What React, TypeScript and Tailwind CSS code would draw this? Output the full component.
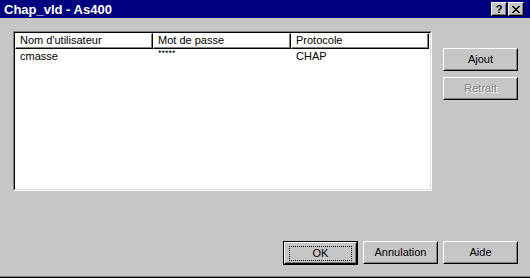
import type { ReactNode } from "react";

const font = "font-['Liberation_Sans',Arial,sans-serif]";

function Button({
  children,
  isDefault,
  disabled,
}: {
  children: ReactNode;
  isDefault?: boolean;
  disabled?: boolean;
}) {
  const inner = (
    <div className="flex h-full w-full border border-b-black border-l-white border-r-black border-t-white">
      <div className="flex h-full w-full items-center justify-center border border-b-[#808080] border-l-[#c6c6c6] border-r-[#808080] border-t-[#c6c6c6]">
        {isDefault ? (
          <span className="flex h-[15px] w-[63px] items-center justify-center border border-dotted border-black">
            {children}
          </span>
        ) : (
          <span
            className={
              disabled ? "text-[#808080] [text-shadow:1px_1px_0_#ffffff]" : ""
            }
          >
            {children}
          </span>
        )}
      </div>
    </div>
  );

  if (isDefault) {
    return (
      <div className="h-[24px] w-[75px] border border-black">{inner}</div>
    );
  }
  return <div className="h-[23px] w-[75px]">{inner}</div>;
}

function TitleButton({ children }: { children: ReactNode }) {
  return (
    <div className="flex h-[14px] w-[16px] border border-b-black border-l-white border-r-black border-t-white bg-[#c6c6c6]">
      <div className="flex h-full w-full items-center justify-center border border-b-[#808080] border-l-[#c6c6c6] border-r-[#808080] border-t-[#c6c6c6]">
        {children}
      </div>
    </div>
  );
}

function HeaderCell({ label }: { label: string }) {
  return (
    <div className="h-[16px] w-[138px] border border-b-black border-l-white border-r-black border-t-white">
      <div className="h-full border-b border-r border-b-[#808080] border-r-[#808080] pl-[4px] leading-[13px]">
        {label}
      </div>
    </div>
  );
}

export default function App() {
  return (
    <div
      className={`${font} flex h-[278px] w-[530px] flex-col bg-[#c6c6c6] text-[11px] text-black`}
    >
      <div className="flex h-[18px] items-center justify-between bg-[#000080] pl-[4px] pr-[6px]">
        <span className="text-[13px] font-bold leading-none text-white">
          Chap_vld - As400
        </span>
        <div className="flex gap-[1px]">
          <TitleButton>
            <span className="text-[11px] font-bold leading-none">?</span>
          </TitleButton>
          <TitleButton>
            <svg width="8" height="7" viewBox="0 0 8 7" shapeRendering="crispEdges">
              <path
                d="M0 0h2v1h-2zM6 0h2v1h-2zM1 1h2v1h-2zM5 1h2v1h-2zM2 2h4v1h-4zM3 3h2v1h-2zM2 4h4v1h-4zM1 5h2v1h-2zM5 5h2v1h-2zM0 6h2v1h-2zM6 6h2v1h-2z"
                fill="#000"
              />
            </svg>
          </TitleButton>
        </div>
      </div>

      <div className="flex flex-1 flex-col border-b border-b-[#808080]">
        <div className="flex pl-[13px] pt-[13px]">
          <div className="h-[160px] w-[419px] border border-b-white border-l-[#808080] border-r-white border-t-[#808080]">
            <div className="h-full w-full border border-b-[#dfdfdf] border-l-black border-r-[#dfdfdf] border-t-black bg-white">
              <div className="flex">
                <HeaderCell label="Nom d'utilisateur" />
                <HeaderCell label="Mot de passe" />
                <HeaderCell label="Protocole" />
              </div>
              <div className="flex h-[14px] items-center leading-[13px]">
                <span className="w-[138px] pl-[5px]">cmasse</span>
                <span className="w-[138px] self-start pl-[5px] text-[9px] leading-[9px]">
                  *****
                </span>
                <span className="w-[138px] pl-[5px]">CHAP</span>
              </div>
            </div>
          </div>
          <div className="ml-[11px] flex flex-col gap-[6px] pt-[17px]">
            <Button>Ajout</Button>
            <Button disabled>Retrait</Button>
          </div>
        </div>

        <div className="flex-1" />

        <div className="flex justify-end gap-[5px] pb-[11px] pr-[12px]">
          <Button isDefault>OK</Button>
          <Button>Annulation</Button>
          <Button>Aide</Button>
        </div>
      </div>
      <div className="h-[1px] bg-black" />
    </div>
  );
}
